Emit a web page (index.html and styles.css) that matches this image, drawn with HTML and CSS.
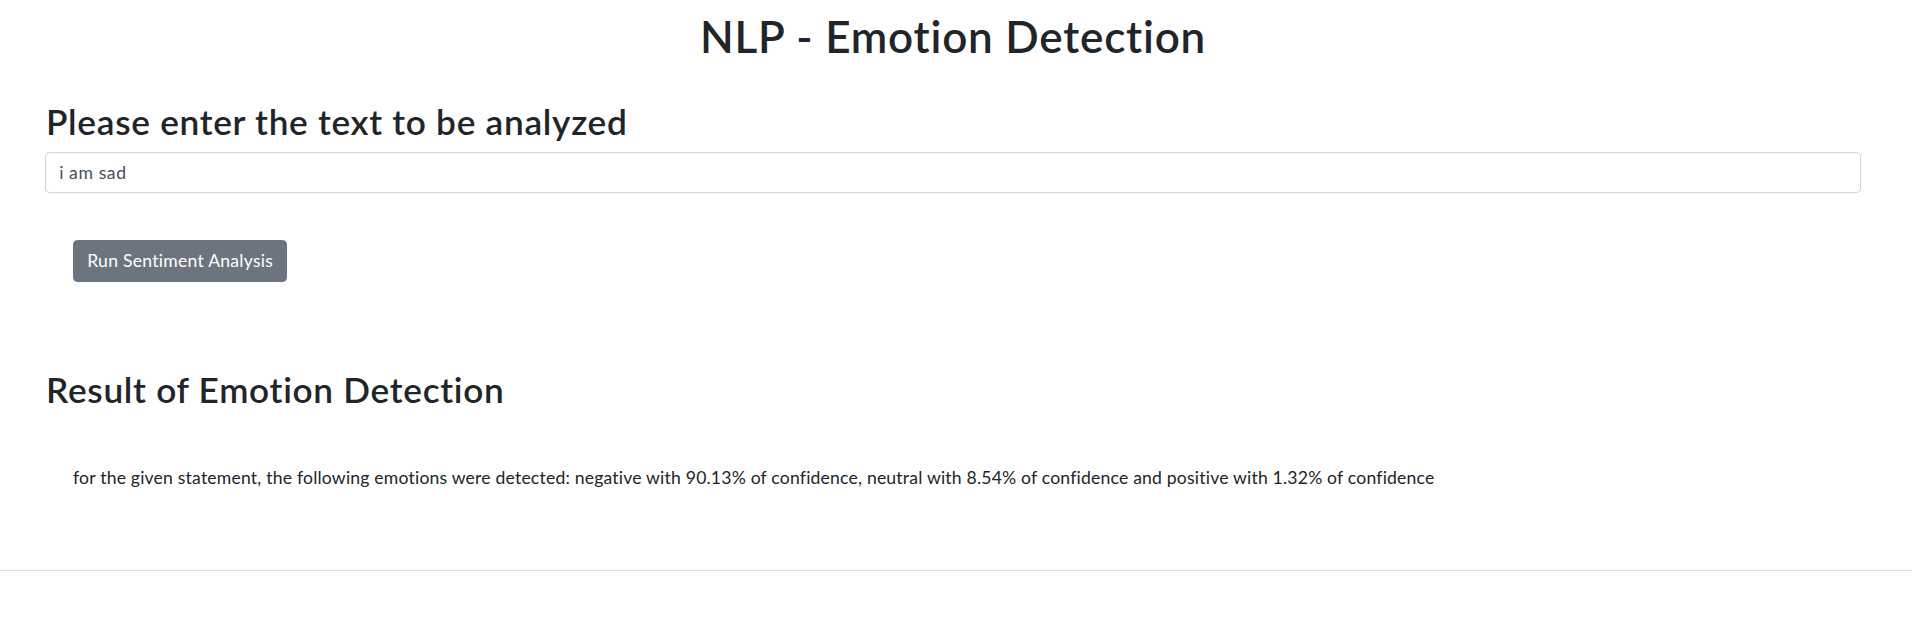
FILE: index.html
```html
<!DOCTYPE html>
<html lang="en">
<head>
<meta charset="utf-8">
<title>NLP - Emotion Detection</title>
<link rel="stylesheet" href="styles.css">
</head>
<body>
<main class="page">
  <h1 class="title">NLP - Emotion Detection</h1>
  <section class="input-section">
    <h2 class="section-title">Please enter the text to be analyzed</h2>
    <input class="text-input" type="text" value="i am sad">
    <div class="actions">
      <button class="btn-run" type="button">Run Sentiment Analysis</button>
    </div>
  </section>
  <section class="result-section">
    <h2 class="section-title">Result of Emotion Detection</h2>
    <p class="result-text">for the given statement, the following emotions were detected: negative with 90.13% of confidence, neutral with 8.54% of confidence and positive with 1.32% of confidence</p>
  </section>
</main>
<hr class="rule">
</body>
</html>
```

FILE: styles.css
```css
html, body {
  margin: 0;
  padding: 0;
  background: #ffffff;
}

body {
  font-family: "Lato", "Open Sans", sans-serif;
  font-size: 17.6px;
  line-height: 1.5;
  color: #212529;
}

.page {
  padding: 0 51px 0 45px;
  display: flex;
  flex-direction: column;
}

.title {
  margin: 10px 0 0 0;
  font-size: 44px;
  line-height: 1.2;
  font-weight: 600;
  letter-spacing: 0.8px;
  text-align: center;
}

.section-title {
  margin: 0;
  padding-left: 1px;
  font-size: 35.2px;
  line-height: 1.2;
  font-weight: 600;
  letter-spacing: 0.72px;
}

.input-section {
  margin-top: 37px;
  display: flex;
  flex-direction: column;
}

.text-input {
  margin-top: 9.5px;
  box-sizing: border-box;
  height: 41.8px;
  padding: 6.6px 13.2px;
  border: 1px solid #ced4da;
  border-radius: 4.4px;
  font-family: inherit;
  font-size: 17.6px;
  letter-spacing: 0.6px;
  color: #495057;
  background: #fff;
  outline: none;
}

.actions {
  margin-top: 46.5px;
  padding-left: 28px;
  display: flex;
}

.btn-run {
  height: 41.8px;
  padding: 6.6px 13.2px;
  border: 1px solid #6c757d;
  border-radius: 4.4px;
  background: #6c757d;
  color: #ffffff;
  font-family: inherit;
  font-size: 17.6px;
  line-height: 1.5;
  letter-spacing: 0.25px;
  cursor: pointer;
}

.result-section {
  margin-top: 86px;
  display: flex;
  flex-direction: column;
}

.result-text {
  margin: 55px 0 0 0;
  padding-left: 28px;
  letter-spacing: 0.19px;
}

.rule {
  margin: 79px 0 0 0;
  border: 0;
  border-top: 1px solid #dedede;
}
```
